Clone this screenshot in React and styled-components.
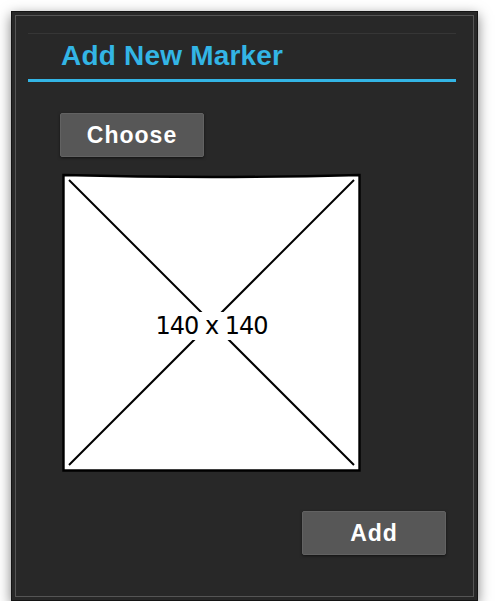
import React from 'react';
import styled, { createGlobalStyle } from 'styled-components';

const GlobalStyle = createGlobalStyle`
  * { box-sizing: border-box; }
  body {
    margin: 0;
    background: #ffffff;
    font-family: "Liberation Sans", Arial, sans-serif;
  }
`;

const App = () => (
  <>
    <GlobalStyle />
    <Panel>
      <Header>
        <Title>Add New Marker</Title>
      </Header>
      <Body>
        <Button>Choose</Button>
        <Placeholder>
          <svg width="299" height="299" viewBox="0 0 299 299">
            <path
              d="M1.5 2 Q150 6 297.5 2 L297.5 297.5 L1.5 297.5 Z"
              fill="#fff"
              stroke="#000"
              strokeWidth="2.4"
            />
            <line x1="7" y1="7" x2="292" y2="292" stroke="#000" strokeWidth="2" />
            <line x1="292" y1="7" x2="7" y2="292" stroke="#000" strokeWidth="2" />
          </svg>
          <Size>140 x 140</Size>
        </Placeholder>
        <Footer>
          <Button>Add</Button>
        </Footer>
      </Body>
    </Panel>
  </>
);

export default App;

const Panel = styled.div`
  margin: 11px 0 0 11px;
  width: 467px;
  height: 590px;
  background: #282828;
  border: 1px solid #141414;
  box-shadow: inset 0 0 0 3px #282828, inset 0 0 0 4px #555555,
    0 4px 12px rgba(0, 0, 0, 0.5);
  display: flex;
  flex-direction: column;
`;

const Header = styled.div`
  margin: 21px 21px 0 16px;
  border-top: 1px solid #363636;
  border-bottom: 3px solid #33b5e5;
  padding: 6px 0 7px 33px;
`;

const Title = styled.h1`
  margin: 0;
  font-size: 28px;
  line-height: 32px;
  font-weight: 700;
  letter-spacing: 0.2px;
  color: #33b5e5;
`;

const Body = styled.div`
  display: flex;
  flex-direction: column;
  align-items: flex-start;
  padding: 31px 31px 0 48px;
`;

const Button = styled.button`
  width: 144px;
  height: 44px;
  padding: 0;
  background: #575757;
  border: 1px solid #626262;
  border-radius: 2px;
  box-shadow: 0 1px 3px rgba(0, 0, 0, 0.55);
  color: #ffffff;
  font-family: "Liberation Sans", Arial, sans-serif;
  font-size: 23px;
  font-weight: 700;
  letter-spacing: 1px;
  cursor: pointer;
`;

const Placeholder = styled.div`
  position: relative;
  margin: 16px 0 0 2px;
  width: 299px;
  height: 299px;

  svg {
    display: block;
  }
`;

const Size = styled.span`
  position: absolute;
  left: 50%;
  top: calc(50% + 3px);
  transform: translate(-50%, -50%);
  padding: 0 4px;
  background: #ffffff;
  color: #000000;
  font-family: "DejaVu Sans", sans-serif;
  font-size: 24px;
  line-height: 28px;
  letter-spacing: -1px;
  white-space: nowrap;
`;

const Footer = styled.div`
  align-self: stretch;
  display: flex;
  justify-content: flex-end;
  margin-top: 39px;
`;
